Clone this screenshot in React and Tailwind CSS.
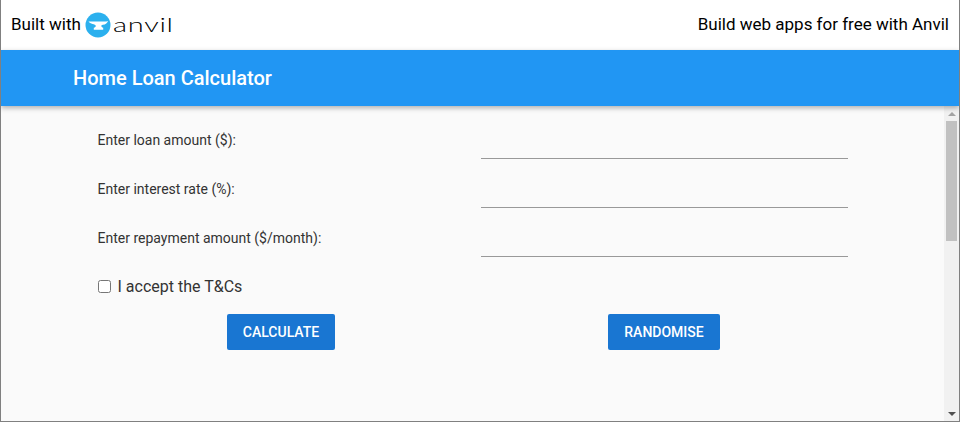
import React from 'react';

const AnvilMark = () => (
  <svg width="26" height="26" viewBox="0 0 26 26" className="shrink-0">
    <circle cx="13" cy="13" r="12.5" fill="#2bb0ee" />
    <path
      d="M3.5 9.5h6.2h9.8c1 0 2.4-.2 3.5-.6c-.5 1.9-2.4 3.6-5.2 3.9c-.9.1-1.5.6-1.5 1.3c0 .8.8 1.3 1.9 1.7v2H8.8v-2c1.3-.4 2-1 2-1.8c0-1.2-1.6-1.7-3.2-2.1c-1.8-.5-3.4-1.2-4.1-2.4z"
      fill="#fff"
    />
  </svg>
);

const FormRow = ({ label }) => (
  <div className="grid grid-cols-[367px_367px] gap-x-4 h-[49px]">
    <div className="pt-2 -ml-[0.5px] text-[14px] leading-[21px] text-[#333333]">{label}</div>
    <div className="h-[38px] mt-[-1px] border-b border-[#999999]" />
  </div>
);

const ActionButton = ({ children, width }) => (
  <div className="flex justify-center pr-[1px]">
    <button className={`${width} h-9 bg-[#1976d2] rounded-[2px] text-white text-[14px] font-medium leading-9 text-center`}>
      {children}
    </button>
  </div>
);

export default function App() {
  return (
    <div className="w-[960px] h-[422px] flex flex-col overflow-hidden border-x border-b border-[#808080] bg-[#fafafa] font-['Roboto',sans-serif]">
      {/* Anvil banner */}
      <div className="h-[50px] shrink-0 bg-white flex items-center justify-between pl-[10px] pr-[10px] text-[17px] text-black">
        <div className="flex items-center gap-[4px]">
          <span>Built with</span>
          <AnvilMark />
          <span className="text-black text-[20px] font-light leading-none tracking-[0.5px] font-['Lato',sans-serif] mt-[-3px] ml-[-2px] origin-left scale-x-[1.45]">
            anvil
          </span>
        </div>
        <span>Build web apps for free with Anvil</span>
      </div>

      {/* App bar */}
      <div className="relative z-10 h-14 shrink-0 bg-[#2196f3] flex items-center pl-[72px] text-white text-[20px] font-medium shadow-[0_2px_5px_rgba(0,0,0,0.3)]">
        Home Loan Calculator
      </div>

      <div className="flex-1 flex min-h-0">
        <div className="flex-1 pl-[97px] pt-4">
          <FormRow label="Enter loan amount ($):" />
          <FormRow label="Enter interest rate (%):" />
          <FormRow label="Enter repayment amount ($/month):" />

          <label className="flex items-center h-[30px] mt-[3px] text-[16px] text-[#333333]">
            <input type="checkbox" className="w-[13px] h-[13px] ml-0 mr-[6.5px] -mt-[1px]" />
            I accept the T&amp;Cs
          </label>

          <div className="grid grid-cols-[367px_367px] gap-x-4 mt-3">
            <ActionButton width="w-[108px]">CALCULATE</ActionButton>
            <ActionButton width="w-[112px]">RANDOMISE</ActionButton>
          </div>
        </div>

        {/* Scrollbar */}
        <div className="w-[15px] shrink-0 bg-[#f1f1f1] flex flex-col">
          <div className="h-[15px] flex items-center justify-center">
            <div className="w-0 h-0 border-x-[4px] border-x-transparent border-b-[4px] border-b-[#a3a3a3]" />
          </div>
          <div className="h-[120px] mx-[2px] bg-[#c1c1c1]" />
          <div className="flex-1" />
          <div className="h-[15px] flex items-center justify-center">
            <div className="w-0 h-0 border-x-[4px] border-x-transparent border-t-[4px] border-t-[#505050]" />
          </div>
        </div>
      </div>
    </div>
  );
}
